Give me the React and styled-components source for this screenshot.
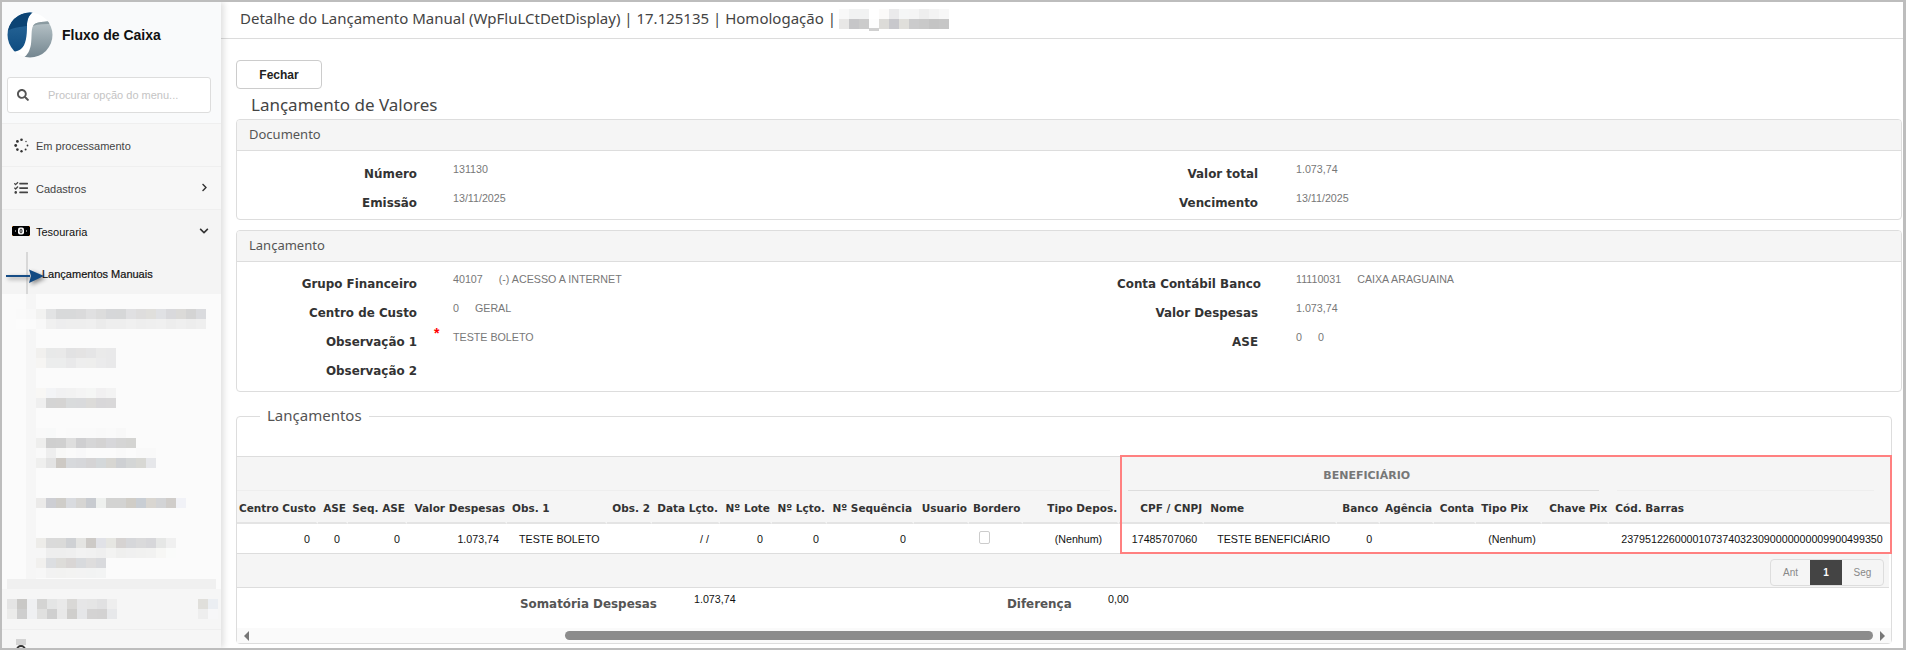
import styled, { createGlobalStyle } from "styled-components";
import { FaSearch, FaChevronRight, FaChevronDown, FaTasks } from "react-icons/fa";

const GlobalStyle = createGlobalStyle`
  html, body { margin: 0; padding: 0; }
  body {
    width: 1906px;
    height: 650px;
    overflow: hidden;
    background: #fff;
    font-family: "Liberation Sans", Arial, sans-serif;
  }
`;

const Frame = styled.div`
  position: relative;
  width: 1906px;
  height: 650px;
  box-sizing: border-box;
  border: 2px solid #bdbdbd;
  border-right-width: 3px;
  display: flex;
  background: #fff;
  overflow: hidden;
`;

/* sidebar */
const Sidebar = styled.aside`
  width: 219px;
  flex: none;
  background: #fbfbfb;
  display: flex;
  flex-direction: column;
  box-shadow: 3px 0 6px rgba(0, 0, 0, 0.12);
  z-index: 2;
`;

const Brand = styled.div`
  height: 65px;
  display: flex;
  align-items: center;
  padding-left: 5px;
  box-sizing: border-box;
  background: #f9fafb;
`;

const BrandName = styled.div`
  margin-left: 9px;
  font-size: 14px;
  font-weight: bold;
  color: #111;
`;

const SearchWrap = styled.div`
  height: 56px;
  padding: 10px 5px 0;
  box-sizing: border-box;
  background: #f9fafb;
`;

const SearchBox = styled.div`
  height: 36px;
  width: 204px;
  box-sizing: border-box;
  border: 1px solid #ddd;
  border-radius: 3px;
  background: #fff;
  display: flex;
  align-items: center;
  padding-left: 9px;
  color: #555;
`;

const Placeholder = styled.span`
  margin-left: 19px;
  font-size: 11px;
  color: #c4c4c4;
`;

const MenuItem = styled.div`
  height: 43px;
  box-sizing: border-box;
  display: flex;
  align-items: center;
  padding: 1px 12px 0 12px;
  background: ${(p) => (p.$open ? "#f4f4f4" : "#f7f7f7")};
  border-top: 1px solid #efefef;
  color: ${(p) => (p.$open ? "#111" : "#444")};
  font-size: 11px;
`;

const MenuIcon = styled.span`
  width: 22px;
  display: flex;
  align-items: center;
  flex: none;
  margin-top: -1px;
`;

const MenuLabel = styled.span`
  flex: 1;
`;

const Chevron = styled.span`
  display: flex;
  margin-top: -2px;
  color: #333;
`;

const SubItem = styled.div`
  height: 42px;
  box-sizing: border-box;
  display: flex;
  align-items: center;
  padding: 2px 0 0 40px;
  background: linear-gradient(90deg, #f4f4f4 24px, #d8d8d8 24px 26px, #f4f4f4 26px);
  color: #111;
  font-size: 11px;
  -webkit-text-stroke: 0.2px #111;
`;

const SubList = styled.div`
  height: 285px;
  padding-top: 15px;
  box-sizing: border-box;
  display: flex;
  flex-direction: column;
  background: linear-gradient(90deg, transparent 24px, #f6f6f6 24px 34px, transparent 34px);
`;

const MosaicRow = styled.div`
  height: 10px;
  display: flex;
  margin-top: ${(p) => p.$top || 0}px;
  padding-left: ${(p) => p.$left ?? 34}px;
`;

const MosaicCell = styled.span`
  width: 10px;
  height: ${(p) => p.$h || 10}px;
  flex: none;
  background: ${(p) => p.$c};
`;

const SideBand = styled.div`
  height: 10px;
  margin: 0 5px;
  background: #f0f0f0;
`;

const SideFooter = styled.div`
  flex: 1;
  background: #f6f6f6;
  padding-top: 10px;
  display: flex;
  flex-direction: column;
  overflow: hidden;
`;

const SplitRow = styled.div`
  display: flex;
  flex: none;
  justify-content: space-between;
  padding: 0 3px 0 5px;
  height: 10px;
`;

const Group = styled.div`
  display: flex;
`;

const FooterItem = styled.div`
  flex: 1;
  margin-top: 10px;
  border-top: 1px solid #efefef;
  padding: 9px 0 0 14px;
  display: flex;
  flex-direction: column;
`;

const FooterArc = styled.span`
  width: 10px;
  height: 10px;
  box-sizing: border-box;
  border: 2px solid #333;
  border-radius: 50%;
`;

const ArrowMark = styled.svg`
  position: absolute;
  left: 0px;
  top: 262px;
  z-index: 5;
  filter: drop-shadow(2px 2px 2px rgba(0, 0, 0, 0.45));
`;

/* main */
const Main = styled.main`
  flex: 1;
  min-width: 0;
  display: flex;
  flex-direction: column;
`;

const TopBar = styled.header`
  height: 37px;
  flex: none;
  box-sizing: border-box;
  border-bottom: 1px solid #dcdcdc;
  padding: 0 0 4px 19px;
  display: flex;
  align-items: center;
  font-family: "Noto Sans", sans-serif;
  font-size: 15px;
  color: #444;
`;

const Censor = styled.div`
  margin: 4px 0 0 3px;
  height: 22px;
  width: 110px;
  position: relative;
`;

const CensorTail = styled.span`
  position: absolute;
  left: 30px;
  top: 19px;
  width: 10px;
  height: 3px;
  background: #d0d0d0;
`;

const Content = styled.div`
  flex: 1;
  padding: 21px 1px 4px 15px;
  display: flex;
  flex-direction: column;
  min-height: 0;
`;

const CloseButton = styled.button`
  width: 86px;
  height: 29px;
  flex: none;
  box-sizing: border-box;
  border: 1px solid #ccc;
  border-radius: 4px;
  background: #fff;
  font-family: "Liberation Sans", Arial, sans-serif;
  font-size: 12px;
  font-weight: bold;
  color: #222;
  padding: 0;
`;

const PageTitle = styled.h1`
  margin: 0;
  height: 30px;
  line-height: 32px;
  padding-left: 15px;
  font-family: "Noto Sans", sans-serif;
  font-weight: 400;
  font-size: 17px;
  color: #444;
`;

const Panel = styled.section`
  box-sizing: border-box;
  height: ${(p) => p.$h}px;
  flex: none;
  margin-bottom: 10px;
  border: 1px solid #ddd;
  border-radius: 4px;
  background: #fff;
  overflow: hidden;
`;

const PanelHead = styled.div`
  height: 31px;
  box-sizing: border-box;
  border-bottom: 1px solid #ddd;
  background: #f5f5f5;
  padding: 0 12px 3px;
  display: flex;
  align-items: center;
  font-family: "Noto Sans", sans-serif;
  font-size: 13px;
  color: #555;
`;

const FormGrid = styled.div`
  display: grid;
  grid-template-columns: 880px 1fr;
  padding-top: ${(p) => p.$top}px;
`;

const FormColumn = styled.div`
  display: flex;
  flex-direction: column;
`;

const Field = styled.div`
  height: 29px;
  display: grid;
  grid-template-columns: ${(p) => p.$label}px 1fr;
`;

const Label = styled.div`
  text-align: right;
  font-family: "DejaVu Sans", sans-serif;
  font-weight: 700;
  font-size: 11.9px;
  line-height: 18px;
  padding-top: 5px;
  color: #333;
  white-space: nowrap;
`;

const Value = styled.div`
  position: relative;
  padding: 2px 0 0 ${(p) => p.$pad || 36}px;
  font-size: 10.7px;
  line-height: 14px;
  color: #777;
  white-space: nowrap;
`;

const ValueNote = styled.span`
  margin-left: 16px;
`;

const Asterisk = styled.span`
  position: absolute;
  left: 17px;
  top: -2px;
  color: #f00;
  font-size: 14px;
  font-weight: bold;
`;

const Fieldset = styled.section`
  position: relative;
  flex: 1;
  box-sizing: border-box;
  margin: 14px 10px 0 0;
  border: 1px solid #ddd;
  border-radius: 4px;
  padding-top: 39px;
  display: flex;
  flex-direction: column;
  min-height: 0;
`;

const Legend = styled.div`
  position: absolute;
  left: 23px;
  top: -14px;
  padding: 0 7px;
  background: #fff;
  font-family: "Noto Sans", sans-serif;
  font-size: 15px;
  line-height: 24px;
  color: #555;
`;

const Table = styled.table`
  table-layout: fixed;
  border-collapse: separate;
  border-spacing: 0;
  width: 1654px;
  flex: none;
`;

const GroupCell = styled.th`
  height: 35px;
  padding: 0;
  box-sizing: border-box;
  background: #f5f5f5;
  border-top: 1px solid #ddd;
`;

const GroupLine = styled.div`
  height: 34px;
  box-sizing: border-box;
  margin: 0 ${(p) => p.$mr || 0}px 0 ${(p) => p.$ml || 0}px;
  padding: 4px 0 0 6px;
  display: flex;
  align-items: center;
  justify-content: center;
  border-bottom: 1px solid ${(p) => (p.$strong ? "#ddd" : "#eee")};
  font-family: "DejaVu Sans", sans-serif;
  font-size: 11px;
  font-weight: 700;
  color: #777;
`;

const HeadCell = styled.th`
  height: 33px;
  padding: 3px 0 0 ${(p) => p.$pl || 0}px;
  box-sizing: border-box;
  background: #f5f5f5;
  border-bottom: 2px solid #e4e4e4;
  border-right: 2px solid #f5f5f5;
  font-family: "DejaVu Sans", sans-serif;
  font-size: 10.5px;
  font-weight: 700;
  color: #333;
  white-space: nowrap;
  text-align: ${(p) => (p.$pl ? "left" : "right")};
`;

const DataCell = styled.td`
  height: 30px;
  padding: 0 ${(p) => p.$pr || 0}px 0 ${(p) => p.$pl || 0}px;
  box-sizing: border-box;
  border-bottom: 1px solid #ddd;
  font-size: 10.7px;
  color: #111;
  white-space: nowrap;
  text-align: ${(p) => (p.$pl ? "left" : "right")};
`;

const FakeCheck = styled.span`
  display: inline-block;
  width: 11px;
  height: 13px;
  box-sizing: border-box;
  margin-top: -5px;
  vertical-align: middle;
  border: 1px solid #ccc;
  border-radius: 2px;
  background: #fff;
`;

const PagerBand = styled.div`
  height: 34px;
  flex: none;
  box-sizing: border-box;
  background: #f5f5f5;
  border-bottom: 1px solid #ddd;
  margin-right: 2px;
  display: flex;
  justify-content: flex-end;
  align-items: flex-start;
  padding: 5px 5px 0 0;
`;

const Pager = styled.div`
  display: flex;
  height: 27px;
  box-sizing: border-box;
  border: 1px solid #ddd;
  border-radius: 4px;
  overflow: hidden;
`;

const PageButton = styled.span`
  width: ${(p) => p.$w}px;
  display: flex;
  align-items: center;
  justify-content: center;
  font-size: 10px;
  font-weight: ${(p) => (p.$active ? "bold" : "normal")};
  background: ${(p) => (p.$active ? "#444" : "transparent")};
  color: ${(p) => (p.$active ? "#fff" : "#888")};
`;

const Totals = styled.div`
  flex: 1;
  display: flex;
  padding-left: 283px;
  padding-top: 8px;
`;

const TotalLabel = styled.div`
  font-family: "DejaVu Sans", sans-serif;
  font-weight: 700;
  font-size: 11.9px;
  line-height: 16px;
  color: #555;
  width: ${(p) => p.$w}px;
`;

const TotalValue = styled.div`
  margin-top: -2px;
  font-size: 10.7px;
  line-height: 10px;
  color: #111;
  width: ${(p) => p.$w}px;
`;

const ScrollBar = styled.div`
  height: 15px;
  flex: none;
  display: flex;
  align-items: center;
  background: #fafafa;
  padding: 0 6px 0 7px;
`;

const ScrollThumb = styled.div`
  height: 9px;
  flex: 1;
  margin: 0 7px 0 316px;
  border-radius: 5px;
  background: #8c8c8c;
`;

const ArrowGlyph = styled.span`
  width: 0;
  height: 0;
  border-top: 5px solid transparent;
  border-bottom: 5px solid transparent;
  ${(p) => (p.$dir === "left" ? "border-right: 5px solid #777;" : "border-left: 5px solid #777;")}
`;

const Highlight = styled.div`
  position: absolute;
  left: 1118px;
  top: 453px;
  width: 772px;
  height: 99px;
  box-sizing: border-box;
  border: 2px solid #ff8080;
  pointer-events: none;
  z-index: 4;
`;

const Logo = () => (
  <svg width="46" height="46" viewBox="0 0 46 46">
    <defs>
      <clipPath id="logoClip">
        <circle cx="23" cy="23" r="22.500" />
      </clipPath>
      <linearGradient id="logoBlue" x1="0" y1="0" x2="0" y2="1">
        <stop offset="0" stopColor="#2f6d9e" />
        <stop offset="1" stopColor="#0e4c80" />
      </linearGradient>
      <linearGradient id="logoGrey" x1="0" y1="0" x2="0" y2="1">
        <stop offset="0" stopColor="#b8c4c8" />
        <stop offset="1" stopColor="#73858f" />
      </linearGradient>
    </defs>
    <g clipPath="url(#logoClip)">
      <rect width="46" height="46" fill="#fff" />
      <path d="M0 0H26C21 4 20 9 20 14C20 24 19 33 14 37C10 40 5 40 0 40Z" fill="url(#logoBlue)" />
      <path d="M0 19C7 15 13 15 20 14C20 8 21 4 26 0H0Z" fill="#0c4474" />
      <path d="M46 46H16C21 43 23 38 24 32C25 24 24 18 26 14C28 10 32 10 46 9Z" fill="url(#logoGrey)" />
      <path d="M26 14C28 10 32 10 46 9V12C38 12 31 12 26 14Z" fill="#8b9ba1" />
    </g>
  </svg>
);

const SpinnerDots = () => (
  <svg width="15" height="15" viewBox="0 0 15 15" fill="#333">
    <circle cx="7.500" cy="1.800" r="1.300" />
    <circle cx="12" cy="3.500" r="0.700" />
    <circle cx="13.500" cy="7.500" r="0.900" />
    <circle cx="11.600" cy="11.600" r="1" />
    <circle cx="7.500" cy="13.300" r="1.200" />
    <circle cx="3.400" cy="11.600" r="1.300" />
    <circle cx="1.700" cy="7.500" r="1.400" />
    <circle cx="3.400" cy="3.400" r="1.400" />
  </svg>
);

const BillIcon = () => (
  <svg width="18" height="10" viewBox="0 0 18 10" style={{ marginLeft: -2 }}>
    <rect width="18" height="10" fill="#000" />
    <path d="M0 0H1V1H0ZM17 0H18V1H17ZM0 9H1V10H0ZM17 9H18V10H17Z" fill="#c77a2a" />
    <rect x="6" y="1.500" width="6" height="7" rx="2" fill="#fff" />
    <ellipse cx="9" cy="5" rx="1" ry="2" fill="none" stroke="#111" strokeWidth="0.900" />
    <rect x="3" y="4.500" width="1" height="1" fill="#fff" />
    <rect x="14" y="4.500" width="1" height="1" fill="#fff" />
  </svg>
);

const cols = [
  { w: 81, h: "Centro Custo", v: "0", pr: 8 },
  { w: 30, h: "ASE", v: "0", pr: 8 },
  { w: 59, h: "Seq. ASE", v: "0", pr: 7 },
  { w: 100, h: "Valor Despesas", v: "1.073,74", pr: 8 },
  { w: 100, h: "Obs. 1", hl: 5, v: "TESTE BOLETO", pl: 12 },
  { w: 45, h: "Obs. 2", v: "" },
  { w: 68, h: "Data Lçto.", v: "/ /", pl: 48 },
  { w: 52, h: "Nº Lote", v: "0", pr: 9 },
  { w: 55, h: "Nº Lçto.", v: "0", pr: 8 },
  { w: 87, h: "Nº Sequência", v: "0", pr: 8 },
  { w: 55, h: "Usuario", v: "" },
  { w: 54, h: "Bordero", hl: 4, check: true, pl: 10 },
  { w: 96, h: "Tipo Depos.", v: "(Nenhum)", pr: 17 },
  { w: 85, h: "CPF / CNPJ", v: "17485707060", pr: 7 },
  { w: 133, h: "Nome", hl: 6, v: "TESTE BENEFICIÁRIO", pl: 13 },
  { w: 43, h: "Banco", v: "0", pr: 8 },
  { w: 54, h: "Agência", v: "" },
  { w: 42, h: "Conta", v: "" },
  { w: 66, h: "Tipo Pix", hl: 5, v: "(Nenhum)", pl: 12 },
  { w: 67, h: "Chave Pix", v: "" },
  { w: 282, h: "Cód. Barras", hl: 6, v: "23795122600001073740323090000000009900499350", pl: 12 },
];

const blur = [
  { left: 14, cells: ["#fafafa", "#f8f8f8", "#f2f2f1", "#e2e3e4", "#d8d9da", "#d8d9da", "#dadadb", "#e0e0e1", "#dcdcdc", "#d6d7d9", "#d6d7d8", "#e0e0e2", "#dedddd", "#e0dfdc", "#e0e1e4", "#d9d9dc", "#dbdad8", "#d4d4d4", "#dadbde"] },
  { left: 14, cells: ["#fcfcfc", "#fbfbfb", "#f8f8f8", "#f0f0f0", "#ededee", "#eeeeee", "#eeeeee", "#efefef", "#ebebeb", "#eeeeee", "#eeeeee", "#f0f0f0", "#eeeeee", "#efefef", "#f0f0f0", "#ededed", "#efefef", "#ededed", "#efefef"] },
  { top: 19, cells: ["#f1f0ee", "#e8e9e9", "#e9e9e9", "#e2e2e3", "#e4e3e3", "#e5e5e6", "#eaeaea", "#e9e9ea"] },
  { cells: ["#f6f5f3", "#eceded", "#eceded", "#e9e9ea", "#eeeeee", "#eeeeed", "#ebebec", "#e9e9ea"] },
  { top: 20, cells: ["#f8f7f5", "#f3f4f6", "#f1f1f2", "#f2f2f2", "#f4f4f4", "#f5f6f5", "#f1f0f1", "#f3f3f3"] },
  { cells: ["#efefef", "#d4d4d4", "#d5d4d3", "#d9dbdc", "#d9dadc", "#dcdbd9", "#d8d7d9", "#d9d8d9"] },
  { top: 20, cells: ["#f9f9f9", "#f8f9f9", "#fbfbfb", "#fafafa", "#fafafa", "#fafafa", "#f9f9f9", "#fafafa", "#f8f8f8", "#fbfbfb"] },
  { cells: ["#eeeeed", "#cfcfcf", "#d0d0d0", "#dedede", "#cfcfd1", "#d6d6d7", "#d4d3d3", "#d7d7da", "#d5d5d5", "#d4d4d2"] },
  { cells: ["#f9f9f9", "#eeeeee", "#f8f8f7", "#fafafa", "#f8f8f9", "#fbfbfb", "#fbfbfb", "#fbfbfb", "#f9f9f9", "#fbfbfb", "#f9f9f9", "#f9f9f9"] },
  { cells: ["#efefee", "#e3e3e3", "#cdc9c4", "#d7d9dc", "#d6d7da", "#d5d4d5", "#d4d8da", "#d7d6d2", "#ced0d3", "#d4d6d6", "#d8d8d4", "#e6e7ea"] },
  { top: 30, cells: ["#ebeae9", "#cdced3", "#cfcdc9", "#d9dbdf", "#d6d5d3", "#c8cbd0", "#eef0ee", "#d3d3d2", "#d3d3d2", "#d0cdc7", "#c9ced4", "#d9d6d1", "#d3d4d6", "#d0cdca", "#f1f2f7"] },
  { top: 30, cells: ["#edece9", "#dadada", "#dadad9", "#cfd1d4", "#e4e4e2", "#cdcac7", "#e1e2e7", "#e6e6e2", "#d6d3d2", "#d6d7da", "#dadadb", "#d7d7da", "#e6e7e6", "#f0f0f0"] },
  { cells: ["#f6f6f6", "#eeeeee", "#eeeeee", "#efefef", "#f2f2f2", "#f1f1f1", "#efefef", "#f3f3f2", "#efefee", "#f0f0f0", "#f1f1f0", "#f2f2f1", "#f7f7f5", "#fafbfa"] },
  { cells: ["#f1f0ee", "#dcdee1", "#dddcd9", "#d9d6d5", "#d8dadd", "#dedddd", "#d9dadd"] },
  { cells: ["#f7f7f7", "#f2f2f2", "#f2f2f1", "#f3f3f2", "#f3f3f3", "#f2f3f3", "#f3f4f4"] },
];

const footerRows = [
  [["#e4e4e4", "#c9c8c6", "#eff0f2", "#d4d4d3", "#e4e5e5", "#e9e9e9", "#d9d8d6", "#e6e6e7", "#e5e5e5", "#e1e1e2", "#eeeeee"], ["#e0dfdb", "#ebeef2"]],
  [["#ebebea", "#cecece", "#eff0f2", "#e0e0df", "#cfcfcf", "#e8e8e8", "#cfcecc", "#e5e6e8", "#d4d3d3", "#d3d2d2", "#e7e8ea"], ["#eeeeee", "#f7f7f8"]],
];

const censorRows = [
  ["#f8f8f8", "#f1f2f2", "#f1f2f2", "#ffffff", "#fbfaf9", "#eaeaeb", "#f5f6f6", "#f5f5f5", "#eeeeee", "#f3f3f3", "#f7f7f7"],
  ["#e8e7e6", "#c6c6c8", "#cbcbcb", "#fdfdfd", "#dcdbd8", "#c8c8cc", "#e0dfdb", "#cbcbcc", "#c9c9c9", "#c4c4c4", "#c6c6c6"],
];

function MosaicLine({ cells }) {
  return cells.map((c, i) => <MosaicCell key={i} $c={c} />);
}

export default function App() {
  return (
    <>
      <GlobalStyle />
      <Frame>
        <Sidebar>
          <Brand>
            <Logo />
            <BrandName>Fluxo de Caixa</BrandName>
          </Brand>
          <SearchWrap>
            <SearchBox>
              <FaSearch size={12} />
              <Placeholder>Procurar opção do menu...</Placeholder>
            </SearchBox>
          </SearchWrap>
          <MenuItem>
            <MenuIcon><SpinnerDots /></MenuIcon>
            <MenuLabel>Em processamento</MenuLabel>
          </MenuItem>
          <MenuItem>
            <MenuIcon><FaTasks size={14} /></MenuIcon>
            <MenuLabel>Cadastros</MenuLabel>
            <Chevron><FaChevronRight size={9} /></Chevron>
          </MenuItem>
          <MenuItem $open>
            <MenuIcon><BillIcon /></MenuIcon>
            <MenuLabel>Tesouraria</MenuLabel>
            <Chevron><FaChevronDown size={10} /></Chevron>
          </MenuItem>
          <SubItem>Lançamentos Manuais</SubItem>
          <SubList>
            {blur.map((row, i) => (
              <MosaicRow key={i} $top={row.top} $left={row.left}>
                <MosaicLine cells={row.cells} />
              </MosaicRow>
            ))}
          </SubList>
          <SideBand />
          <SideFooter>
            {footerRows.map((row, i) => (
              <SplitRow key={i}>
                <Group><MosaicLine cells={row[0]} /></Group>
                <Group><MosaicLine cells={row[1]} /></Group>
              </SplitRow>
            ))}
            <FooterItem>
              <MosaicCell $c="#d4d4d4" $h={6} />
              <FooterArc />
            </FooterItem>
          </SideFooter>
        </Sidebar>
        <ArrowMark width="48" height="26" viewBox="0 0 48 26">
          <path d="M4 12H28" stroke="#164d86" strokeWidth="2" />
          <path d="M27 5.500L42 12L27 19L29 12Z" fill="#124a82" />
        </ArrowMark>
        <Main>
          <TopBar>
            Detalhe do Lançamento Manual (WpFluLCtDetDisplay) | 17.125135 | Homologação |
            <Censor>
              {censorRows.map((cells, i) => (
                <MosaicRow key={i} $left={0}><MosaicLine cells={cells} /></MosaicRow>
              ))}
              <CensorTail />
            </Censor>
          </TopBar>
          <Content>
            <CloseButton>Fechar</CloseButton>
            <PageTitle>Lançamento de Valores</PageTitle>
            <Panel $h={101}>
              <PanelHead>Documento</PanelHead>
              <FormGrid $top={9}>
                <FormColumn>
                  <Field $label={180}><Label>Número</Label><Value>131130</Value></Field>
                  <Field $label={180}><Label>Emissão</Label><Value>13/11/2025</Value></Field>
                </FormColumn>
                <FormColumn>
                  <Field $label={141}><Label>Valor total</Label><Value $pad={38}>1.073,74</Value></Field>
                  <Field $label={141}><Label>Vencimento</Label><Value $pad={38}>13/11/2025</Value></Field>
                </FormColumn>
              </FormGrid>
            </Panel>
            <Panel $h={162}>
              <PanelHead>Lançamento</PanelHead>
              <FormGrid $top={8}>
                <FormColumn>
                  <Field $label={180}><Label>Grupo Financeiro</Label><Value>40107<ValueNote>(-) ACESSO A INTERNET</ValueNote></Value></Field>
                  <Field $label={180}><Label>Centro de Custo</Label><Value>0<ValueNote>GERAL</ValueNote></Value></Field>
                  <Field $label={180}><Label>Observação 1</Label><Value><Asterisk>*</Asterisk>TESTE BOLETO</Value></Field>
                  <Field $label={180}><Label>Observação 2</Label><Value /></Field>
                </FormColumn>
                <FormColumn>
                  <Field $label={141}><Label>Conta Contábil Banco</Label><Value $pad={38}>11110031<ValueNote>CAIXA ARAGUAINA</ValueNote></Value></Field>
                  <Field $label={141}><Label>Valor Despesas</Label><Value $pad={38}>1.073,74</Value></Field>
                  <Field $label={141}><Label>ASE</Label><Value $pad={38}>0<ValueNote>0</ValueNote></Value></Field>
                </FormColumn>
              </FormGrid>
            </Panel>
            <Fieldset>
              <Legend>Lançamentos</Legend>
              <Table>
                <colgroup>
                  {cols.map((c) => <col key={c.h} style={{ width: c.w }} />)}
                </colgroup>
                <thead>
                  <tr>
                    <GroupCell colSpan={13}><GroupLine $mr={9} /></GroupCell>
                    <GroupCell colSpan={7}><GroupLine $strong $ml={9} $mr={10}>BENEFICIÁRIO</GroupLine></GroupCell>
                    <GroupCell><GroupLine $ml={8} $mr={17} /></GroupCell>
                  </tr>
                  <tr>
                    {cols.map((c) => <HeadCell key={c.h} $pl={c.hl}>{c.h}</HeadCell>)}
                  </tr>
                </thead>
                <tbody>
                  <tr>
                    {cols.map((c) => (
                      <DataCell key={c.h} $pl={c.pl} $pr={c.pr}>
                        {c.check ? <FakeCheck /> : c.v}
                      </DataCell>
                    ))}
                  </tr>
                </tbody>
              </Table>
              <PagerBand>
                <Pager>
                  <PageButton $w={39}>Ant</PageButton>
                  <PageButton $w={32} $active>1</PageButton>
                  <PageButton $w={41}>Seg</PageButton>
                </Pager>
              </PagerBand>
              <Totals>
                <TotalLabel $w={174}>Somatória Despesas</TotalLabel>
                <TotalValue $w={313}>1.073,74</TotalValue>
                <TotalLabel $w={101}>Diferença</TotalLabel>
                <TotalValue $w={40}>0,00</TotalValue>
              </Totals>
              <ScrollBar>
                <ArrowGlyph $dir="left" />
                <ScrollThumb />
                <ArrowGlyph $dir="right" />
              </ScrollBar>
            </Fieldset>
          </Content>
        </Main>
        <Highlight />
      </Frame>
    </>
  );
}
